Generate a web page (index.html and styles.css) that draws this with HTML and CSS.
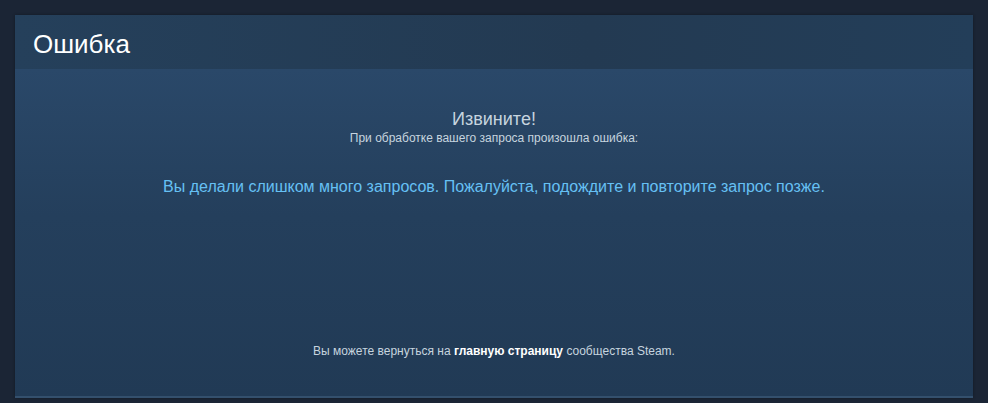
FILE: index.html
```html
<!DOCTYPE html>
<html lang="ru">
<head>
<meta charset="utf-8">
<title>Ошибка</title>
<link rel="stylesheet" href="styles.css">
</head>
<body>
<div class="page">
  <div class="panel">
    <div class="panel-header">
      <h1 class="title">Ошибка</h1>
    </div>
    <div class="panel-body">
      <h3 class="sorry">Извините!</h3>
      <div class="sub">При обработке вашего запроса произошла ошибка:</div>
      <div class="message">Вы делали слишком много запросов. Пожалуйста, подождите и повторите запрос позже.</div>
      <div class="footer">Вы можете вернуться на <a class="link" href="#">главную страницу</a> сообщества Steam.</div>
    </div>
  </div>
</div>
</body>
</html>
```

FILE: styles.css
```css
html, body {
  margin: 0;
  padding: 0;
  height: 100%;
  background: #1b2535;
  font-family: "Liberation Sans", Arial, Helvetica, sans-serif;
  overflow: hidden;
}
.page {
  padding: 15px 15px 0 15px;
}
.panel {
  width: 958px;
  height: 383px;
  display: flex;
  flex-direction: column;
  box-sizing: border-box;
  border-bottom: 2px solid #34506d;
  box-shadow: 0 0 3px rgba(0,0,0,0.3);
}
.panel-header {
  height: 54px;
  flex: none;
  background: linear-gradient(to right, #25405b 0%, #233a52 60%, #233e59 100%);
  display: flex;
  align-items: center;
  padding-left: 18px;
  box-sizing: border-box;
}
.title {
  margin: 0;
  font-size: 26px;
  font-weight: normal;
  color: #ffffff;
  line-height: 1;
  padding-top: 3px;
}
.panel-body {
  flex: 1;
  background: linear-gradient(to bottom, #2a4869 0%, #243f5c 45%, #213a55 100%);
  text-align: center;
  display: flex;
  flex-direction: column;
  align-items: center;
  padding-top: 40px;
  box-sizing: border-box;
}
.sorry {
  margin: 0;
  font-size: 18px;
  font-weight: normal;
  color: #c6d4df;
  line-height: 21px;
}
.sub {
  font-size: 12px;
  color: #c6d4df;
  line-height: 14px;
  margin-top: 1px;
}
.message {
  font-size: 16px;
  color: #66c0f4;
  line-height: 18px;
  margin-top: 33px;
}
.footer {
  margin-top: auto;
  margin-bottom: 37px;
  font-size: 12px;
  color: #c6d4df;
  line-height: 16px;
}
.link {
  color: #ffffff;
  font-weight: bold;
  text-decoration: none;
}
```
